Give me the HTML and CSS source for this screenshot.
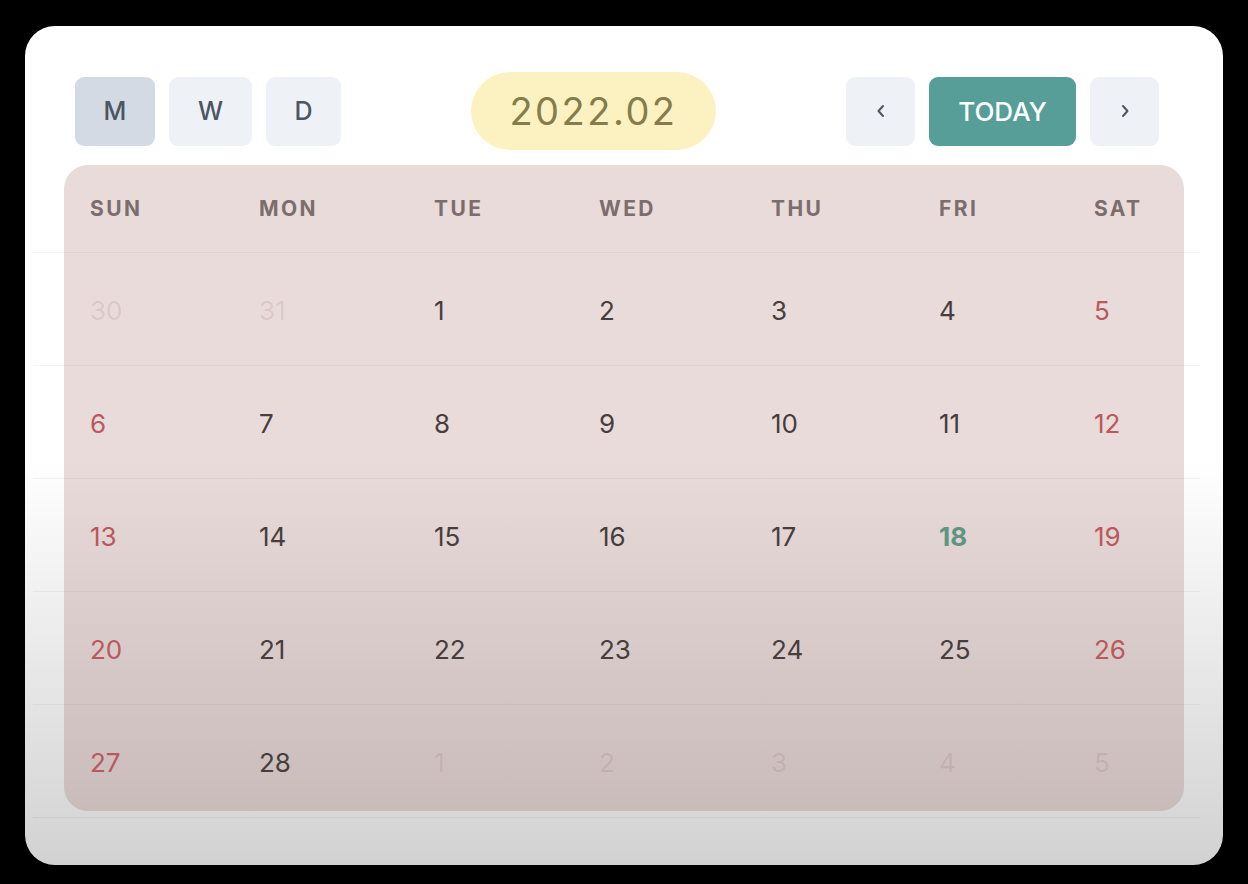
FILE: index.html
```html
<!DOCTYPE html>
<html lang="en">
<head>
    <meta charset="UTF-8">
    <meta name="viewport" content="width=device-width, initial-scale=1.0">
    <title>Calendar</title>
    <link rel="stylesheet" href="styles.css">
</head>
<body>
    <div class="card">
        <div class="toolbar">
            <div class="view-switch">
                <button class="btn btn-view active">M</button>
                <button class="btn btn-view">W</button>
                <button class="btn btn-view">D</button>
            </div>
            <div class="month-title">2022.02</div>
            <div class="nav">
                <button class="btn btn-nav" aria-label="Previous">
                    <svg width="10" height="14" viewBox="0 0 10 14"><polyline points="7,2 2.5,7 7,12" fill="none" stroke="#4b5563" stroke-width="2" stroke-linecap="round" stroke-linejoin="round"/></svg>
                </button>
                <button class="btn btn-today">TODAY</button>
                <button class="btn btn-nav" aria-label="Next">
                    <svg width="10" height="14" viewBox="0 0 10 14"><polyline points="3,2 7.5,7 3,12" fill="none" stroke="#4b5563" stroke-width="2" stroke-linecap="round" stroke-linejoin="round"/></svg>
                </button>
            </div>
        </div>

        <div class="calendar">
            <div class="highlight"></div>

            <div class="week head">
                <div class="cell"><span>SUN</span></div>
                <div class="cell"><span>MON</span></div>
                <div class="cell"><span>TUE</span></div>
                <div class="cell"><span>WED</span></div>
                <div class="cell"><span>THU</span></div>
                <div class="cell"><span>FRI</span></div>
                <div class="cell"><span>SAT</span></div>
            </div>

            <div class="week">
                <div class="cell other"><span>30</span></div>
                <div class="cell other"><span>31</span></div>
                <div class="cell"><span>1</span></div>
                <div class="cell"><span>2</span></div>
                <div class="cell"><span>3</span></div>
                <div class="cell"><span>4</span></div>
                <div class="cell weekend"><span>5</span></div>
            </div>
            <div class="week">
                <div class="cell weekend"><span>6</span></div>
                <div class="cell"><span>7</span></div>
                <div class="cell"><span>8</span></div>
                <div class="cell"><span>9</span></div>
                <div class="cell"><span>10</span></div>
                <div class="cell"><span>11</span></div>
                <div class="cell weekend"><span>12</span></div>
            </div>
            <div class="week">
                <div class="cell weekend"><span>13</span></div>
                <div class="cell"><span>14</span></div>
                <div class="cell"><span>15</span></div>
                <div class="cell"><span>16</span></div>
                <div class="cell"><span>17</span></div>
                <div class="cell today"><span>18</span></div>
                <div class="cell weekend"><span>19</span></div>
            </div>
            <div class="week">
                <div class="cell weekend"><span>20</span></div>
                <div class="cell"><span>21</span></div>
                <div class="cell"><span>22</span></div>
                <div class="cell"><span>23</span></div>
                <div class="cell"><span>24</span></div>
                <div class="cell"><span>25</span></div>
                <div class="cell weekend"><span>26</span></div>
            </div>
            <div class="week">
                <div class="cell weekend"><span>27</span></div>
                <div class="cell"><span>28</span></div>
                <div class="cell other"><span>1</span></div>
                <div class="cell other"><span>2</span></div>
                <div class="cell other"><span>3</span></div>
                <div class="cell other"><span>4</span></div>
                <div class="cell other"><span>5</span></div>
            </div>
        </div>
    </div>
</body>
</html>
```

FILE: styles.css
```css
body {
    margin: 0;
    padding: 0;
    background-color: #000;
    font-family: Inter, 'Noto Sans', sans-serif;
}

.card {
    width: 1198px;
    height: 839px;
    margin: 26px 0 0 25px;
    border-radius: 30px;
    background: linear-gradient(to bottom, #fff 0%, #fff 52%, #d2d2d2 100%);
    overflow: hidden;
}

.toolbar {
    display: flex;
    justify-content: space-between;
    align-items: center;
    margin: 46px 64px 0 50px;
}

.view-switch, .nav {
    display: flex;
    align-items: center;
    gap: 14px;
}

.btn {
    border: none;
    outline: none;
    height: 69px;
    border-radius: 9px;
    font-family: Inter, 'Noto Sans', sans-serif;
    cursor: pointer;
    display: flex;
    align-items: center;
    justify-content: center;
    padding: 0;
}

.btn-view {
    background-color: #eef1f5;
    color: #4b5563;
    font-size: 25px;
    font-weight: 500;
    width: 83px;
}

.btn-view:first-child { width: 80px; }
.btn-view:last-child { width: 75px; }

.btn-view.active {
    background-color: #d3dae3;
}

.month-title {
    background-color: #fcf2c1;
    color: #847c4a;
    font-size: 38px;
    letter-spacing: 2.5px;
    height: 78px;
    width: 245px;
    border-radius: 39px;
    display: flex;
    align-items: center;
    justify-content: center;
}

.btn-nav {
    background-color: #eef1f5;
    width: 69px;
}

.btn-today {
    background-color: #579e99;
    color: #fff;
    font-size: 26px;
    font-weight: 500;
    width: 147px;
}

.calendar {
    position: relative;
    margin: 11px 23px 0 8px;
}

.highlight {
    position: absolute;
    left: 31px;
    top: 4px;
    width: 1120px;
    height: 646px;
    border-radius: 24px;
    background-color: rgba(145, 75, 65, 0.2);
}

.week {
    display: grid;
    grid-template-columns: 169px 175px 165px 172px 168px 155px 1fr;
    height: 113px;
    border-bottom: 1px solid rgba(0, 0, 0, 0.045);
    box-sizing: border-box;
}

.week.head {
    height: 92px;
}

.cell {
    display: flex;
    align-items: center;
    padding-left: 57px;
    padding-top: 3px;
    color: #463d3d;
    font-size: 26px;
}

.cell span {
    position: relative;
}

.head .cell {
    color: #7b6d6d;
    font-size: 21px;
    font-weight: 700;
    letter-spacing: 2.4px;
}

.cell.weekend { color: #b9585d; }

.cell.other { color: rgba(110, 70, 70, 0.12); }

.cell.today {
    color: #5f9482;
    font-weight: 700;
}
```
